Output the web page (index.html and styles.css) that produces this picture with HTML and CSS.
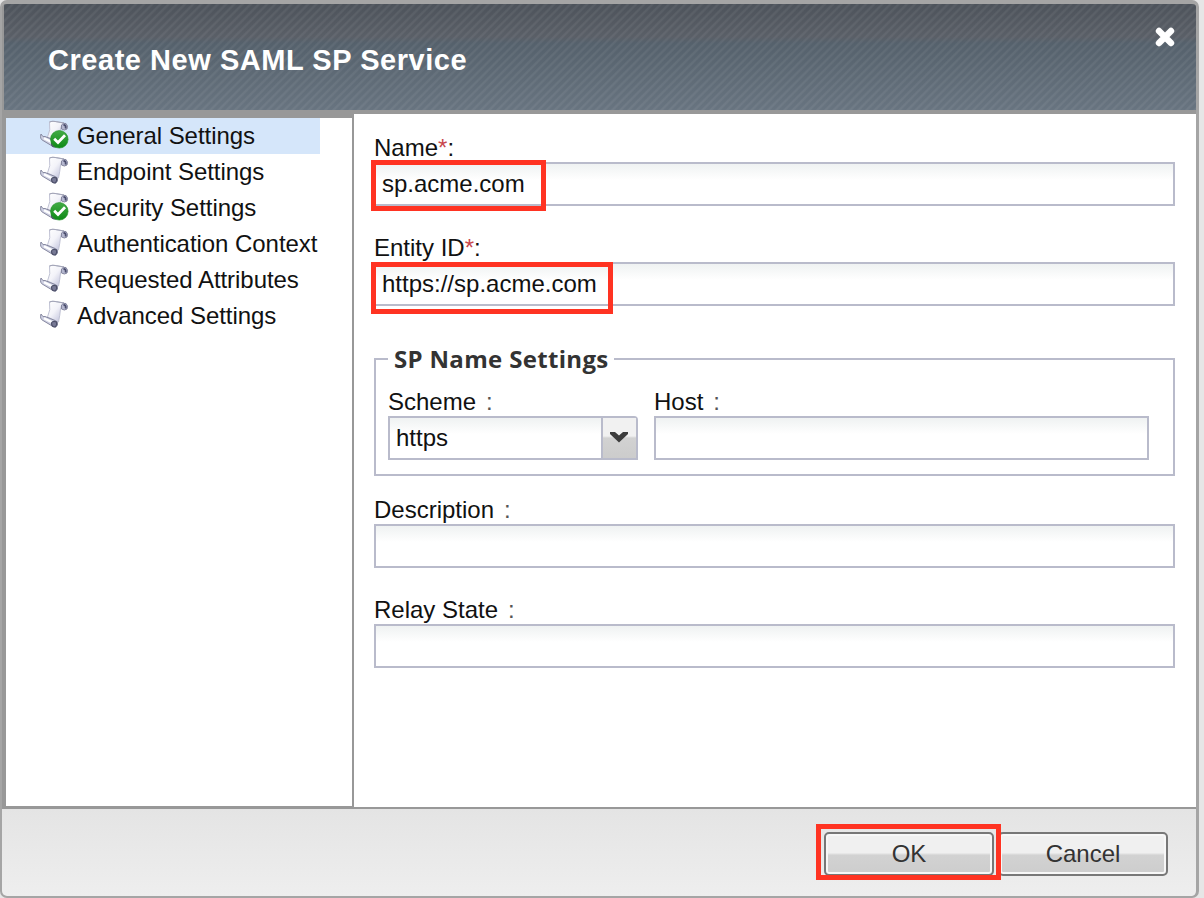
FILE: index.html
```html
<!DOCTYPE html>
<html lang="en">
<head>
<meta charset="utf-8">
<title>Create New SAML SP Service</title>
<link rel="stylesheet" href="styles.css">
</head>
<body>
<svg class="defs" width="0" height="0" aria-hidden="true">
  <defs>
    <linearGradient id="paper" x1="0" y1="0" x2="1" y2="1">
      <stop offset="0" stop-color="#ffffff"/><stop offset=".45" stop-color="#f3f3f9"/><stop offset="1" stop-color="#b4b6d4"/>
    </linearGradient>
    <linearGradient id="green" x1="0" y1="0" x2="0" y2="1">
      <stop offset="0" stop-color="#43ab45"/><stop offset="1" stop-color="#0d8a16"/>
    </linearGradient>
    <symbol id="scroll" viewBox="0 0 30 30">
      <path d="M10.500 2 Q13 .8 16 1.500 L25 3 Q22 5 21.500 9 Q21 15 19.500 22 L8.500 17 Q12 10 10.500 2Z" fill="url(#paper)" stroke="#c0c2d4" stroke-width="1"/>
      <path d="M10.500 2 Q13 .8 16.500 1.500 L25 3" fill="none" stroke="#a2a4b6" stroke-width="1.200"/>
      <path d="M22.500 5 Q24 2.500 27 3.500 Q29.500 6 28 9 Q25.500 11 22.500 9Z" fill="#b6b8d0" stroke="#85879f" stroke-width="1"/>
      <path d="M24.500 5 Q27.500 5 26.500 8.500" fill="none" stroke="#4a4d6c" stroke-width="1.800"/>
      <path d="M2 14 Q.5 19 4 20.500 L14 26.500 Q17 28.500 18.500 25 Q19 21 16 20.500 L6 16.500 Q4 18 2 14Z" fill="#cfd1e3" stroke="#85879f" stroke-width="1"/>
      <path d="M5 18.300 L12.500 22" stroke="#fff" stroke-width="2.200"/>
      <path d="M12.500 23 Q14 20.500 17.500 22 Q18.500 25 16 27 Q12.500 27 12.500 23Z" fill="#777995" stroke="#4d5069" stroke-width="1.200"/>
    </symbol>
    <symbol id="check" viewBox="0 0 30 30">
      <circle cx="20.300" cy="19.300" r="8.800" fill="url(#green)" stroke="#22932a" stroke-width=".6"/>
      <path d="M15.200 18.800 L19 22.500 L26 15.200" fill="none" stroke="#fff" stroke-width="2.800"/>
    </symbol>
  </defs>
</svg>
<div class="dialog">
  <header class="titlebar">
    <h1 class="title">Create New SAML SP Service</h1>
    <svg class="close" viewBox="0 0 20 20" aria-label="Close"><path d="M4 4L16 16M16 4L4 16" stroke="#fff" stroke-width="6.400" stroke-linecap="round"/></svg>
  </header>
  <div class="body">
    <nav class="sidebar">
      <a class="item selected"><svg class="icon"><use href="#scroll"/><use href="#check"/></svg><span>General Settings</span></a>
      <a class="item"><svg class="icon"><use href="#scroll"/></svg><span>Endpoint Settings</span></a>
      <a class="item"><svg class="icon"><use href="#scroll"/><use href="#check"/></svg><span>Security Settings</span></a>
      <a class="item"><svg class="icon"><use href="#scroll"/></svg><span>Authentication Context</span></a>
      <a class="item"><svg class="icon"><use href="#scroll"/></svg><span>Requested Attributes</span></a>
      <a class="item"><svg class="icon"><use href="#scroll"/></svg><span>Advanced Settings</span></a>
    </nav>
    <main class="form">
      <div class="field">
        <div class="label">Name<span class="req">*</span>:</div>
        <div class="input">sp.acme.com<i class="mark mark-name"></i></div>
      </div>
      <div class="field">
        <div class="label">Entity ID<span class="req">*</span>:</div>
        <div class="input">https://sp.acme.com<i class="mark mark-entity"></i></div>
      </div>
      <fieldset class="group">
        <legend class="legend">SP Name Settings</legend>
        <div class="row">
          <div class="scheme">
            <div class="label">Scheme<span class="colon">:</span></div>
            <div class="input combo"><span>https</span>
              <span class="trigger"><svg class="arrow" viewBox="0 0 18 12"><path d="M0 1h5l4 3.500L13 1h5v2L9 11.500 0 3z" fill="#3c3c3c"/></svg></span>
            </div>
          </div>
          <div class="host">
            <div class="label">Host<span class="colon">:</span></div>
            <div class="input"></div>
          </div>
        </div>
      </fieldset>
      <div class="field">
        <div class="label">Description<span class="colon">:</span></div>
        <div class="input"></div>
      </div>
      <div class="field">
        <div class="label">Relay State<span class="colon">:</span></div>
        <div class="input"></div>
      </div>
    </main>
  </div>
  <footer class="footer">
    <div class="button ok">OK<i class="mark mark-ok"></i></div>
    <div class="button cancel">Cancel</div>
  </footer>
</div>
</body>
</html>
```

FILE: styles.css
```css
* { box-sizing: border-box; }
body {
  margin: 0;
  background: #e6e6e6;
  font: 24px/28px "Liberation Sans", Arial, sans-serif;
  color: #111;
  overflow: hidden;
}
.defs { position: absolute; }
.dialog {
  width: 1199px;
  height: 898px;
  display: flex;
  flex-direction: column;
  border: solid #a5a5a5;
  border-width: 4px 3px 2px 2px;
  border-radius: 7px;
  background: #989898;
  overflow: hidden;
}
.titlebar {
  flex: none;
  height: 106px;
  margin: 0 0 0 2px;
  width: 1192px;
  padding: 23px 21px 0 44px;
  display: flex;
  justify-content: space-between;
  align-items: flex-start;
  background:
    repeating-linear-gradient(135deg, rgba(255,255,255,.06) 0 1px, transparent 2.500px 4.500px, rgba(255,255,255,.06) 5.800px),
    linear-gradient(#4d535b 0, #5a5f67 31%, #55616c 37%, #687480 100%);
}
.title {
  margin: 18px 0 0;
  font: bold 29px/30px "Liberation Sans", Arial, sans-serif;
  letter-spacing: .54px;
  color: #fff;
}
.close { width: 20px; height: 20px; }
.body {
  flex: none;
  height: 699px;
  margin-left: 2px;
  width: 1192px;
  padding-top: 4px;
  display: flex;
}
.sidebar {
  width: 346px;
  height: 688px;
  margin: 4px 2px 0 2px;
  background: #fff;
}
.item {
  display: flex;
  align-items: center;
  width: 314px;
  height: 36px;
  padding: 0 0 1px 33px;
  gap: 8px;
  white-space: nowrap;
  letter-spacing: -.05px;
}
.selected { background: #d5e6fa; }
.icon { width: 30px; height: 30px; flex: none; margin-bottom: 1px; }
.form {
  flex: 1;
  height: 693px;
  padding: 20px 21px 0 20px;
  background: #fff;
}
.field { margin-bottom: 28px; }
.label { height: 28px; line-height: 27px; white-space: nowrap; }
.req { color: #c8484e; }
.colon { margin-left: 10px; color: #555; }
.input {
  position: relative;
  height: 44px;
  padding: 0 6px;
  line-height: 39px;
  border: 2px solid #b9bbcb;
  background: linear-gradient(#eff2f2, #fff 16px);
}
.mark { position: absolute; border: 5px solid #ff3322; }
.mark-name { left: -5px; top: -4px; width: 175px; height: 51px; }
.mark-entity { left: -5px; top: -2px; width: 242px; height: 52px; }
.group {
  width: 801px;
  height: 131px;
  margin: 39px 0 20px;
  padding: 16px 24px 0 12px;
  border: 2px solid #b9bbcb;
}
.legend {
  padding: 0 5px 0 6px;
  height: 27px;
  font: bold 24px/27px "Open Sans", "Noto Sans", sans-serif;
  letter-spacing: .33px;
  color: #333;
}
.row { display: flex; gap: 16px; }
.scheme { width: 250px; }
.host { flex: 1; }
.combo { display: flex; justify-content: space-between; padding-right: 0; border-radius: 0 4px 0 0; }
.trigger {
  display: flex;
  width: 35px;
  justify-content: center;
  align-items: center;
  border-left: 2px solid #b9bbcb;
  background: linear-gradient(#f1f1f1 45%, #d2d2d2 50%, #ccc);
}
.arrow { width: 18px; height: 12px; margin: 0 2px 3px 0; }
.footer {
  flex: 1;
  display: flex;
  justify-content: flex-end;
  padding: 23px 28px 0 0;
  background: linear-gradient(#e4e4e4, #eee);
}
.button {
  position: relative;
  width: 170px;
  height: 44px;
  line-height: 39px;
  text-align: center;
  color: #333;
  border: 2px solid #777;
  border-radius: 5px;
  box-shadow: inset 0 0 0 2px #f7f7f7;
  background: linear-gradient(#f0f0f0 47%, #d2d2d2 53%, #cdcdcd);
}
.cancel { margin-left: 4px; }
.mark-ok { left: -10px; top: -10px; width: 185px; height: 56px; z-index: 1; }
```
